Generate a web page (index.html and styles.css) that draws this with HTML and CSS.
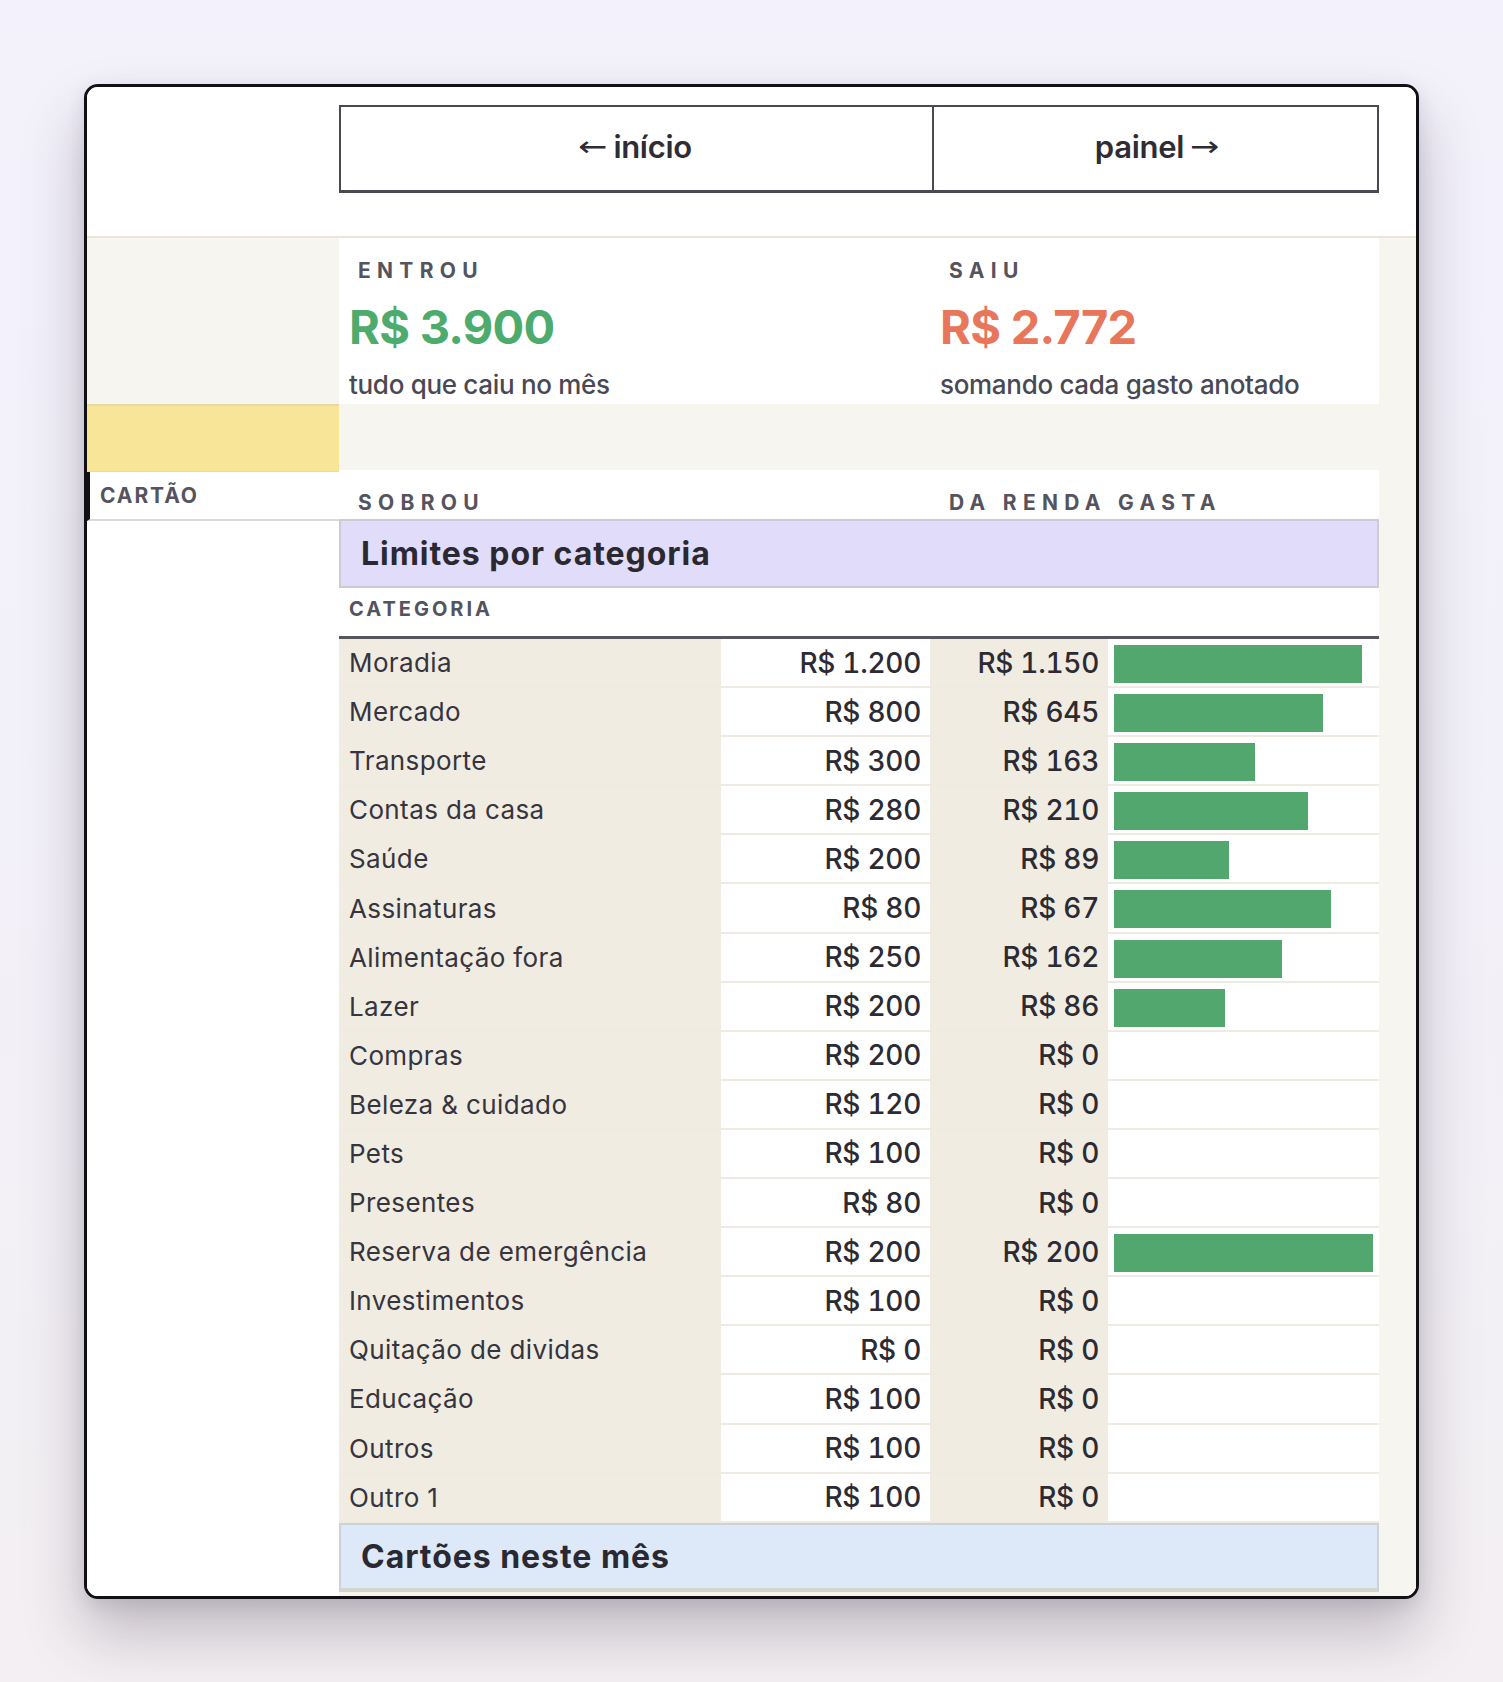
FILE: index.html
```html
<!DOCTYPE html>
<html lang="pt-BR">
<head>
<meta charset="utf-8">
<title>Cartão</title>
<link rel="stylesheet" href="styles.css">
</head>
<body>
<div class="frame">
  <header class="top">
    <div class="top-side"></div>
    <nav class="nav">
      <a class="nav-btn"><span class="arr">←</span>início</a>
      <a class="nav-btn">painel<span class="arr">→</span></a>
    </nav>
    <div class="top-gutter"></div>
  </header>
  <div class="body">
    <aside class="side">
      <div class="side-top"></div>
      <div class="side-yellow"></div>
      <div class="side-item">CARTÃO</div>
      <div class="side-rest"></div>
    </aside>
    <main class="main">
      <section class="stats">
        <div class="stat">
          <div class="stat-label">ENTROU</div>
          <div class="stat-value green">R$ 3.900</div>
          <div class="stat-sub">tudo que caiu no mês</div>
        </div>
        <div class="stat">
          <div class="stat-label">SAIU</div>
          <div class="stat-value orange">R$ 2.772</div>
          <div class="stat-sub">somando cada gasto anotado</div>
        </div>
      </section>
      <section class="stats stats-clip">
        <div class="stat">
          <div class="stat-label">SOBROU</div>
        </div>
        <div class="stat">
          <div class="stat-label">DA RENDA GASTA</div>
        </div>
      </section>
      <section class="panel">
        <h2 class="panel-head lavender">Limites por categoria</h2>
        <div class="table">
          <div class="row head">
            <div class="c name">CATEGORIA</div>
            <div class="c lim"></div>
            <div class="c spent"></div>
            <div class="c bar"></div>
          </div>
          <div class="row"><div class="c name">Moradia</div><div class="c lim">R$ 1.200</div><div class="c spent">R$ 1.150</div><div class="c bar"><span class="fill" style="width:95.8%"></span></div></div>
          <div class="row"><div class="c name">Mercado</div><div class="c lim">R$ 800</div><div class="c spent">R$ 645</div><div class="c bar"><span class="fill" style="width:80.6%"></span></div></div>
          <div class="row"><div class="c name">Transporte</div><div class="c lim">R$ 300</div><div class="c spent">R$ 163</div><div class="c bar"><span class="fill" style="width:54.3%"></span></div></div>
          <div class="row"><div class="c name">Contas da casa</div><div class="c lim">R$ 280</div><div class="c spent">R$ 210</div><div class="c bar"><span class="fill" style="width:75%"></span></div></div>
          <div class="row"><div class="c name">Saúde</div><div class="c lim">R$ 200</div><div class="c spent">R$ 89</div><div class="c bar"><span class="fill" style="width:44.5%"></span></div></div>
          <div class="row"><div class="c name">Assinaturas</div><div class="c lim">R$ 80</div><div class="c spent">R$ 67</div><div class="c bar"><span class="fill" style="width:83.75%"></span></div></div>
          <div class="row"><div class="c name">Alimentação fora</div><div class="c lim">R$ 250</div><div class="c spent">R$ 162</div><div class="c bar"><span class="fill" style="width:64.8%"></span></div></div>
          <div class="row"><div class="c name">Lazer</div><div class="c lim">R$ 200</div><div class="c spent">R$ 86</div><div class="c bar"><span class="fill" style="width:43%"></span></div></div>
          <div class="row"><div class="c name">Compras</div><div class="c lim">R$ 200</div><div class="c spent">R$ 0</div><div class="c bar"></div></div>
          <div class="row"><div class="c name">Beleza &amp; cuidado</div><div class="c lim">R$ 120</div><div class="c spent">R$ 0</div><div class="c bar"></div></div>
          <div class="row"><div class="c name">Pets</div><div class="c lim">R$ 100</div><div class="c spent">R$ 0</div><div class="c bar"></div></div>
          <div class="row"><div class="c name">Presentes</div><div class="c lim">R$ 80</div><div class="c spent">R$ 0</div><div class="c bar"></div></div>
          <div class="row"><div class="c name">Reserva de emergência</div><div class="c lim">R$ 200</div><div class="c spent">R$ 200</div><div class="c bar"><span class="fill" style="width:100%"></span></div></div>
          <div class="row"><div class="c name">Investimentos</div><div class="c lim">R$ 100</div><div class="c spent">R$ 0</div><div class="c bar"></div></div>
          <div class="row"><div class="c name">Quitação de dividas</div><div class="c lim">R$ 0</div><div class="c spent">R$ 0</div><div class="c bar"></div></div>
          <div class="row"><div class="c name">Educação</div><div class="c lim">R$ 100</div><div class="c spent">R$ 0</div><div class="c bar"></div></div>
          <div class="row"><div class="c name">Outros</div><div class="c lim">R$ 100</div><div class="c spent">R$ 0</div><div class="c bar"></div></div>
          <div class="row"><div class="c name">Outro 1</div><div class="c lim">R$ 100</div><div class="c spent">R$ 0</div><div class="c bar"></div></div>
        </div>
      </section>
      <section class="panel">
        <h2 class="panel-head blue">Cartões neste mês</h2>
      </section>
    </main>
    <div class="gutter"></div>
  </div>
</div>
</body>
</html>
```

FILE: styles.css
```css
* { box-sizing: border-box; }

html, body {
  margin: 0;
  padding: 0;
}

body {
  min-height: 1682px;
  padding: 84px;
  background: linear-gradient(180deg, #f3f1fb 0%, #f2f0f9 45%, #f3eff2 100%);
  font-family: Inter, "Noto Sans", "Liberation Sans", sans-serif;
  color: #2f2d36;
}

.frame {
  width: 1335px;
  height: 1515px;
  background: #ffffff;
  border: 3px solid #111014;
  border-radius: 14px;
  overflow: hidden;
  box-shadow: 0 34px 60px rgba(60, 50, 70, 0.28), 0 6px 18px rgba(60, 50, 80, 0.12);
  display: flex;
  flex-direction: column;
}

/* top header */
.top {
  display: grid;
  grid-template-columns: 252px 1040px 1fr;
  height: 149px;
  padding-top: 18px;
  background: #ffffff;
  flex: none;
}

.nav {
  display: grid;
  grid-template-columns: 591px 1fr;
  height: 88px;
  border: 2px solid #4b4a52;
  border-bottom-width: 3px;
}

.nav-btn {
  display: flex;
  align-items: center;
  justify-content: center;
  gap: 9px;
  font-size: 31px;
  font-weight: 600;
  letter-spacing: -0.01em;
  color: #2e2c35;
  padding-bottom: 4px;
}

.arr {
  font-family: "DejaVu Sans", sans-serif;
  font-weight: 400;
  font-size: 28px;
  transform: scaleX(1.25);
}

.nav-btn + .nav-btn {
  border-left: 2px solid #4b4a52;
}

/* body */
.body {
  flex: 1;
  display: grid;
  grid-template-columns: 252px 1040px 1fr;
  background: #f7f5ef;
  border-top: 2px solid #ece6da;
  min-height: 0;
}

.side {
  display: flex;
  flex-direction: column;
}

.side-top {
  height: 166px;
  background: #f7f5ef;
}

.side-yellow {
  height: 68px;
  background: #f8e598;
  border-top: 2px solid #e9dba0;
  border-bottom: 1px solid #e9dba0;
}

.side-item {
  height: 49px;
  display: flex;
  align-items: center;
  padding-left: 10px;
  background: #ffffff;
  border-left: 3px solid #111014;
  border-bottom: 2px solid #dedbd6;
  font-size: 21px;
  font-weight: 700;
  letter-spacing: 0.09em;
  color: #55535e;
}

.side-rest {
  flex: 1;
  background: #ffffff;
}

.main {
  display: flex;
  flex-direction: column;
  min-width: 0;
}

.stats {
  display: grid;
  grid-template-columns: 591px 1fr;
  background: #ffffff;
  height: 166px;
}

.stats-clip {
  margin-top: 66px;
  height: 49px;
  overflow: hidden;
}

.stat {
  padding: 21px 10px 0;
}

.stat-label {
  margin-left: 9px;
  font-size: 21px;
  line-height: 24px;
  font-weight: 700;
  letter-spacing: 0.3em;
  color: #55535e;
}

.stat-value {
  margin-top: 17px;
  font-size: 47px;
  line-height: 54px;
  font-weight: 700;
  letter-spacing: -0.015em;
}

.green { color: #4dab6d; }
.orange { color: #e8765a; }

.stat-sub {
  margin-top: 17px;
  font-size: 26px;
  line-height: 28px;
  font-weight: 500;
  letter-spacing: -0.012em;
  color: #4a4853;
}

/* panels */
.panel {
  background: #ffffff;
}

.panel-head {
  margin: 0;
  height: 69px;
  display: flex;
  align-items: center;
  padding-left: 20px;
  border: 2px solid #cfcbd6;
  font-size: 32px;
  font-weight: 700;
  letter-spacing: 0.03em;
  color: #2a2830;
}

.lavender { background: #e0dcf9; }
.blue {
  background: #dde8f8;
  border-color: #cdd2d8;
  border-bottom: 4px solid #d3d6cc;
}

.table {
  display: flex;
  flex-direction: column;
}

.row {
  display: grid;
  grid-template-columns: 382px 209px 178px 1fr;
  height: 49.1px;
  border-bottom: 2px solid #efebe3;
}

.row.head {
  height: 51px;
  border-bottom: 3px solid #57565c;
}

.c {
  display: flex;
  align-items: center;
  min-width: 0;
}

.name {
  background: #f0ece1;
  padding-left: 10px;
  font-size: 26px;
  letter-spacing: 0.015em;
  color: #36343e;
}

.head .name {
  background: #ffffff;
  font-size: 20px;
  font-weight: 700;
  letter-spacing: 0.15em;
  color: #55535e;
  padding-bottom: 6px;
}

.head .spent { background: #ffffff; }

.lim, .spent {
  justify-content: flex-end;
  padding-right: 9px;
  font-size: 28px;
  font-weight: 500;
  font-variant-numeric: tabular-nums;
  letter-spacing: -0.01em;
  color: #2c2a32;
}

.spent {
  background: #f0ece1;
}

.bar {
  padding: 6px 6px 3px;
  align-items: stretch;
}

.fill {
  display: block;
  background: #52a76f;
  height: 38px;
}

.gutter {
  background: #f7f5ef;
}
```
